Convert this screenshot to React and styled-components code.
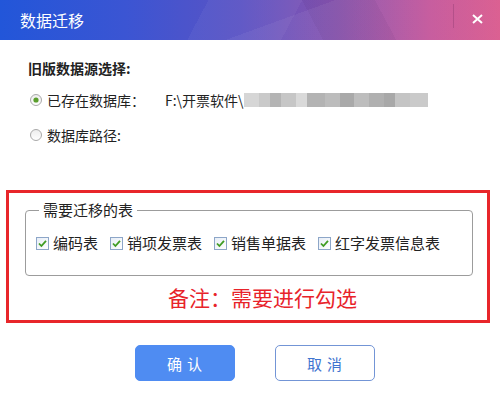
import React from 'react';
import styled, { createGlobalStyle } from 'styled-components';

const GlobalStyle = createGlobalStyle`
  html, body { margin: 0; padding: 0; background: #fff; }
  body { font-family: "Noto Sans CJK SC", "Liberation Sans", sans-serif; color: #222; }
`;

const Dialog = styled.div`
  width: 500px;
  height: 400px;
  background: #fff;
  overflow: hidden;
  display: flex;
  flex-direction: column;
`;

const TitleBar = styled.div`
  height: 40px;
  flex: none;
  display: flex;
  align-items: center;
  padding-left: 20px;
  color: #fff;
  font-size: 16px;
  background:
    linear-gradient(160deg, rgba(255,255,255,0) 55%, rgba(255,255,255,0.05) 55%),
    linear-gradient(118deg, rgba(255,255,255,0) 40%, rgba(255,255,255,0.045) 40%, rgba(255,255,255,0.045) 58%, rgba(255,255,255,0) 58%),
    linear-gradient(62deg, rgba(0,0,0,0) 62%, rgba(60,20,90,0.07) 62%, rgba(60,20,90,0.07) 76%, rgba(0,0,0,0) 76%),
    linear-gradient(90deg, #2256d9 0%, #3b55d3 25%, #5a53c4 48%, #8a54ae 68%, #c4559a 86%, #d9588c 100%);
`;

const TitleText = styled.span`
  line-height: 20px;
`;

const CloseArea = styled.div`
  margin-left: auto;
  height: 40px;
  display: flex;
  align-items: center;
`;

const Divider = styled.div`
  width: 1px;
  height: 24px;
  margin-top: -8px;
  background: rgba(80, 20, 70, 0.2);
`;

const CloseButton = styled.div`
  width: 46px;
  height: 40px;
  display: flex;
  align-items: center;
  justify-content: center;
  margin-top: -3px;
`;

const Source = styled.div`
  padding: 18px 0 0 28px;
`;

const SectionTitle = styled.div`
  font-size: 14px;
  font-weight: bold;
  line-height: 20px;
`;

const RadioList = styled.div`
  margin-top: 12px;
  padding-left: 2px;
  display: flex;
  flex-direction: column;
  gap: 15px;
`;

const RadioRow = styled.div`
  display: flex;
  align-items: center;
  height: 20px;
  font-size: 14px;
`;

const RadioLabel = styled.span`
  margin-left: 5px;
  line-height: 20px;
`;

const PathText = styled.span`
  margin-left: 20px;
  line-height: 20px;
`;

const Blurred = styled.span`
  display: inline-block;
  width: 184px;
  height: 14px;
  margin-top: -1px;
  background: linear-gradient(90deg,
    #d6d6d6 0 8%, #c9c9c9 8% 14%, #b4b4b4 14% 20%, #c6c6c6 20% 28%, #d9d9d9 28% 34%,
    #b3b3b3 34% 44%, #bcbcbc 44% 52%, #a9a9a9 52% 60%, #bdbdbd 60% 68%, #b0b0b0 68% 76%,
    #a8a8a8 76% 82%, #c4c4c4 82% 90%, #cacaca 90% 100%);
`;

const RedBox = styled.div`
  box-sizing: border-box;
  margin: 45px 0 0 6px;
  width: 484px;
  height: 133px;
  border: 3px solid #e8262a;
  padding: 7px 14px 0 16px;
`;

const Group = styled.fieldset`
  margin: 0;
  min-width: 0;
  border: 1px solid #9c9c9c;
  border-radius: 4px;
  padding: 13px 10px 22px;
`;

const Legend = styled.legend`
  margin-left: 3px;
  padding: 0 4px;
  font-size: 15px;
  line-height: 20px;
`;

const CheckRow = styled.div`
  display: flex;
  align-items: center;
  gap: 12px;
  height: 20px;
`;

const CheckItem = styled.label`
  display: flex;
  align-items: center;
  gap: 4px;
  font-size: 15px;
  line-height: 20px;
`;

const Remark = styled.div`
  margin-top: 7px;
  padding-left: 143px;
  font-size: 21px;
  line-height: 28px;
  color: #e8232a;
`;

const Actions = styled.div`
  margin-top: 22px;
  padding-left: 9px;
  display: flex;
  justify-content: center;
  gap: 40px;
`;

const Button = styled.div`
  box-sizing: border-box;
  width: 100px;
  height: 36px;
  border-radius: 5px;
  display: flex;
  align-items: center;
  justify-content: center;
  font-size: 15px;
  letter-spacing: 5px;
  text-indent: 5px;
  background: ${p => (p.$primary ? '#4f8cf2' : '#fff')};
  color: ${p => (p.$primary ? '#fff' : '#3f74d0')};
  border: 1px solid ${p => (p.$primary ? '#4f8cf2' : '#7395d6')};
`;

const Radio = ({ checked }) => (
  <svg width="12" height="12" viewBox="0 0 12 12">
    <defs>
      <linearGradient id="rg" x1="0" y1="0" x2="0" y2="1">
        <stop offset="0" stopColor="#ececec" />
        <stop offset="1" stopColor="#ffffff" />
      </linearGradient>
    </defs>
    <circle cx="6" cy="6" r="5.5" fill="url(#rg)" stroke="#a9a9a9" />
    {checked && <circle cx="6" cy="6" r="2.6" fill="#5a9e2c" />}
  </svg>
);

const CheckBox = () => (
  <svg width="13" height="13" viewBox="0 0 13 13">
    <defs>
      <linearGradient id="cg" x1="0" y1="0" x2="1" y2="1">
        <stop offset="0" stopColor="#e6edf6" />
        <stop offset="1" stopColor="#ffffff" />
      </linearGradient>
    </defs>
    <rect x="0.5" y="0.5" width="12" height="12" fill="url(#cg)" stroke="#8da6c8" />
    <path d="M3 6.5 L5.4 9 L10 3.8" fill="none" stroke="#3f9c22" strokeWidth="1.8" />
  </svg>
);

const tables = ['编码表', '销项发票表', '销售单据表', '红字发票信息表'];

export default function App() {
  return (
    <>
      <GlobalStyle />
      <Dialog>
        <TitleBar>
          <TitleText>数据迁移</TitleText>
          <CloseArea>
            <Divider />
            <CloseButton>
              <svg width="11" height="10" viewBox="0 0 11 10">
                <path d="M1 1 L10 9 M10 1 L1 9" stroke="#fff" strokeWidth="2" />
              </svg>
            </CloseButton>
          </CloseArea>
        </TitleBar>

        <Source>
          <SectionTitle>旧版数据源选择:</SectionTitle>
          <RadioList>
            <RadioRow>
              <Radio checked />
              <RadioLabel>已存在数据库：</RadioLabel>
              <PathText>F:\开票软件\</PathText>
              <Blurred />
            </RadioRow>
            <RadioRow>
              <Radio />
              <RadioLabel>数据库路径:</RadioLabel>
            </RadioRow>
          </RadioList>
        </Source>

        <RedBox>
          <Group>
            <Legend>需要迁移的表</Legend>
            <CheckRow>
              {tables.map(t => (
                <CheckItem key={t}>
                  <CheckBox />
                  {t}
                </CheckItem>
              ))}
            </CheckRow>
          </Group>
          <Remark>备注：需要进行勾选</Remark>
        </RedBox>

        <Actions>
          <Button $primary>确认</Button>
          <Button>取消</Button>
        </Actions>
      </Dialog>
    </>
  );
}
